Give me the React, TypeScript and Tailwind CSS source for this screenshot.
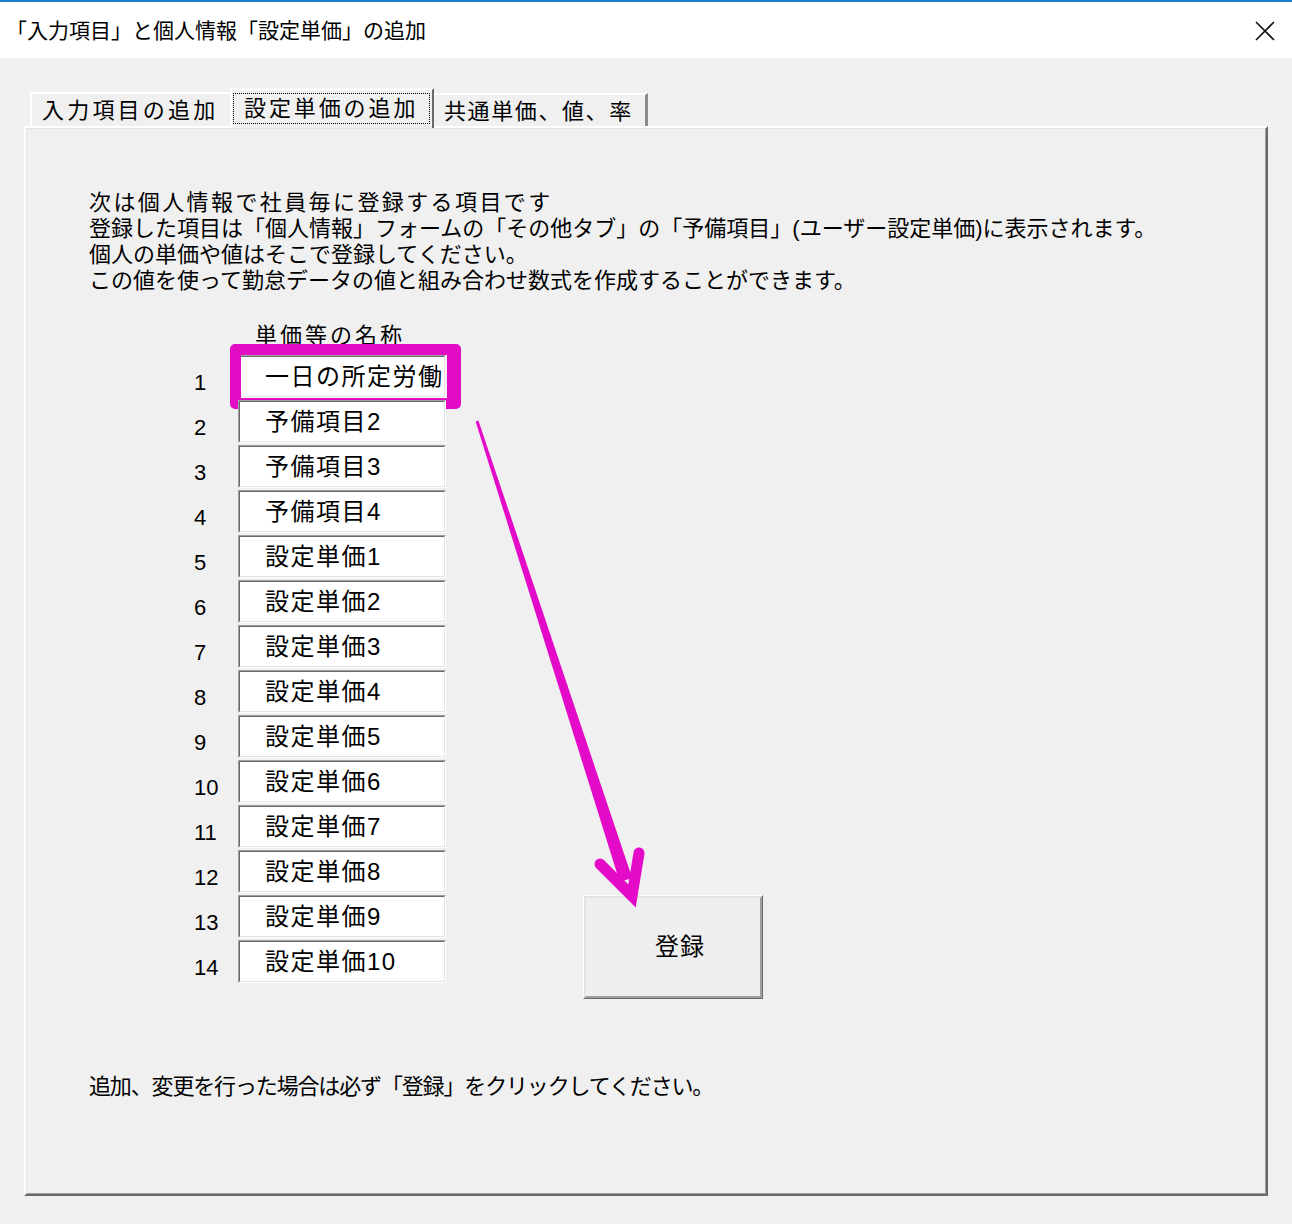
import React from "react";

const rows = [
  "一日の所定労働時間",
  "予備項目2",
  "予備項目3",
  "予備項目4",
  "設定単価1",
  "設定単価2",
  "設定単価3",
  "設定単価4",
  "設定単価5",
  "設定単価6",
  "設定単価7",
  "設定単価8",
  "設定単価9",
  "設定単価10",
];

const notes = [
  { text: "次は個人情報で社員毎に登録する項目です", track: "tracking-[2.4px]" },
  {
    text: "登録した項目は「個人情報」フォームの「その他タブ」の「予備項目」(ユーザー設定単価)に表示されます。",
    track: "tracking-[0px]",
  },
  { text: "個人の単価や値はそこで登録してください。", track: "tracking-[0px]" },
  {
    text: "この値を使って勤怠データの値と組み合わせ数式を作成することができます。",
    track: "tracking-[0px]",
  },
];

const TextBox = ({ value }: { value: string }) => (
  <div className="w-[208px] h-[43px] border border-t-[#a0a0a0] border-l-[#a0a0a0] border-b-white border-r-white">
    <div className="h-full border border-t-[#696969] border-l-[#696969] border-b-[#e3e3e3] border-r-[#e3e3e3] bg-white overflow-hidden flex items-center pl-[25px]">
      <span className="whitespace-nowrap text-[24px] leading-none tracking-[1.5px] text-black">
        {value}
      </span>
    </div>
  </div>
);

export default function App() {
  return (
    <div className="relative w-[1292px] h-[1224px] bg-[#f0f0f0] overflow-hidden text-black font-['Liberation_Sans','Noto_Sans_CJK_JP',sans-serif]">
      {/* title bar */}
      <header className="h-[58px] border-t-2 border-[#1a7dd0] bg-white flex items-center justify-between pl-[6px] pr-[17px]">
        <span className="text-[21px] leading-none">「入力項目」と個人情報「設定単価」の追加</span>
        <svg width="20" height="20" viewBox="0 0 20 20" className="mt-[1px]">
          <path d="M1 1 L19 19 M19 1 L1 19" stroke="#111" strokeWidth="1.6" />
        </svg>
      </header>

      <div className="pt-[30px] pl-[24px]">
        {/* tabs */}
        <div className="flex items-end h-[38px] pl-[6px]">
          <div className="h-[34px] w-[200px] border-t-2 border-l-2 border-white bg-[#f0f0f0] flex items-center pl-[10px]">
            <span className="text-[22px] leading-none tracking-[3.2px] mt-[2px]">入力項目の追加</span>
          </div>
          <div className="relative z-10 -mb-[2px] h-[40px] w-[204px] border-t-2 border-l-2 border-white border-r-2 border-r-[#696969] bg-[#f0f0f0] pt-[3px] pl-[1px] pr-[2px]">
            <div className="h-[31px] border border-dotted border-black flex items-center pl-[10px]">
              <span className="text-[22px] leading-none tracking-[2.9px]">設定単価の追加</span>
            </div>
          </div>
          <div className="h-[33px] w-[214px] border-t-2 border-white border-r-[3px] border-r-[#8a8a8a] bg-[#f0f0f0] flex items-center pl-[10px]">
            <span className="text-[22px] leading-none tracking-[1.6px] mt-[2px]">共通単価、値、率</span>
          </div>
        </div>

        {/* panel */}
        <div className="w-[1244px] h-[1070px] border-2 border-t-white border-l-white border-b-[#696969] border-r-[#696969]">
          <div className="h-full border border-t-[#e3e3e3] border-l-[#e3e3e3] border-b-[#a0a0a0] border-r-[#a0a0a0] pl-[62px] pt-[61px]">
            <div className="text-[22px] leading-[26px]">
              {notes.map((n) => (
                <p key={n.text} className={`whitespace-nowrap ${n.track}`}>
                  {n.text}
                </p>
              ))}
            </div>

            <div className="flex items-start mt-[29px]">
              <div className="pl-[105px]">
                <p className="pl-[61px] text-[22px] leading-[26px] tracking-[3px] h-[26px]">単価等の名称</p>
                <div className="flex flex-col gap-[2px] mt-[6px]">
                  {rows.map((r, i) => (
                    <div key={r} className="flex items-center">
                      <span className="w-[44px] text-[22px] leading-none pt-[12px]">{i + 1}</span>
                      <div className="relative">
                        <TextBox value={r} />
                        {i === 0 && (
                          <div className="absolute -left-[8px] -top-[11px] w-[231px] h-[65px] border-[11px] border-r-[14px] border-[#e20cc4] rounded-[5px]" />
                        )}
                      </div>
                    </div>
                  ))}
                </div>
              </div>

              <div className="ml-[137px] mt-[572px] w-[180px] h-[104px] border border-t-white border-l-white border-b-[#696969] border-r-[#696969]">
                <div className="h-full border-2 border-t-[#e3e3e3] border-l-[#e3e3e3] border-b-[#a0a0a0] border-r-[#a0a0a0] bg-[#efefef] flex items-center justify-center pl-[14px]">
                  <span className="text-[24px] leading-none tracking-[1px]">登録</span>
                </div>
              </div>
            </div>

            <p className="mt-[75px] text-[22px] leading-[26px] tracking-[-1.15px] whitespace-nowrap">
              追加、変更を行った場合は必ず「登録」をクリックしてください。
            </p>
          </div>
        </div>
      </div>

      {/* annotation arrow */}
      <svg className="absolute left-0 top-0 pointer-events-none" width="1292" height="1224">
        <polygon points="478.4,420.5 632.2,878 619.8,882 475.6,421.5" fill="#e40bc8" />
        <path
          d="M600 864 L632 896 L639 853"
          fill="none"
          stroke="#e40bc8"
          strokeWidth="11"
          strokeLinecap="round"
          strokeLinejoin="miter"
        />
      </svg>
    </div>
  );
}
